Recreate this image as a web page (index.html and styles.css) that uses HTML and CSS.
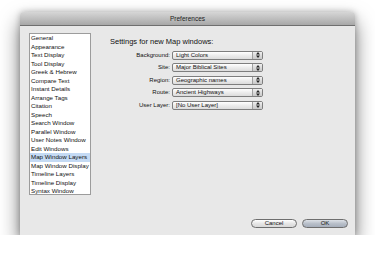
FILE: index.html
```html
<!DOCTYPE html>
<html lang="en">
<head>
    <meta charset="UTF-8">
    <meta name="viewport" content="width=device-width, initial-scale=1.0">
    <title>Preferences</title>
    <link rel="stylesheet" href="styles.css">
</head>
<body>
    <div class="window">
        <div class="titlebar">Preferences</div>
        <div class="content">
            <div class="panes">
                <ul class="pref-list">
                    <li>General</li>
                    <li>Appearance</li>
                    <li>Text Display</li>
                    <li>Tool Display</li>
                    <li>Greek &amp; Hebrew</li>
                    <li>Compare Text</li>
                    <li>Instant Details</li>
                    <li>Arrange Tags</li>
                    <li>Citation</li>
                    <li>Speech</li>
                    <li>Search Window</li>
                    <li>Parallel Window</li>
                    <li>User Notes Window</li>
                    <li>Edit Windows</li>
                    <li class="selected">Map Window Layers</li>
                    <li>Map Window Display</li>
                    <li>Timeline Layers</li>
                    <li>Timeline Display</li>
                    <li>Syntax Window</li>
                </ul>
                <div class="settings">
                    <h2>Settings for new Map windows:</h2>
                    <div class="form">
                        <label>Background:</label>
                        <div class="popup"><span class="value">Light Colors</span><span class="arrows"><svg width="4" height="6" viewBox="0 0 4 6"><path d="M0 2.5L2 0L4 2.5Z M0 3.5L2 6L4 3.5Z" fill="#222"/></svg></span></div>
                        <label>Site:</label>
                        <div class="popup"><span class="value">Major Biblical Sites</span><span class="arrows"><svg width="4" height="6" viewBox="0 0 4 6"><path d="M0 2.5L2 0L4 2.5Z M0 3.5L2 6L4 3.5Z" fill="#222"/></svg></span></div>
                        <label>Region:</label>
                        <div class="popup"><span class="value">Geographic names</span><span class="arrows"><svg width="4" height="6" viewBox="0 0 4 6"><path d="M0 2.5L2 0L4 2.5Z M0 3.5L2 6L4 3.5Z" fill="#222"/></svg></span></div>
                        <label>Route:</label>
                        <div class="popup"><span class="value">Ancient Highways</span><span class="arrows"><svg width="4" height="6" viewBox="0 0 4 6"><path d="M0 2.5L2 0L4 2.5Z M0 3.5L2 6L4 3.5Z" fill="#222"/></svg></span></div>
                        <label>User Layer:</label>
                        <div class="popup"><span class="value">[No User Layer]</span><span class="arrows"><svg width="4" height="6" viewBox="0 0 4 6"><path d="M0 2.5L2 0L4 2.5Z M0 3.5L2 6L4 3.5Z" fill="#222"/></svg></span></div>
                    </div>
                </div>
            </div>
            <div class="buttons">
                <button class="btn">Cancel</button>
                <button class="btn btn-default">OK</button>
            </div>
        </div>
    </div>
</body>
</html>
```

FILE: styles.css
```css
body {
    margin: 0;
    padding: 12px 0 0 20px;
    background-color: #ffffff;
    font-family: "Liberation Sans", Arial, sans-serif;
    color: #111;
}
.window {
    width: 335px;
    height: 223px;
    background-color: #e8e8e8;
    border-radius: 4px 4px 0 0;
    box-shadow: 0 10px 20px rgba(0, 0, 0, 0.55), 0 0 6px rgba(0, 0, 0, 0.25);
    display: flex;
    flex-direction: column;
}
.titlebar {
    height: 14px;
    line-height: 13px;
    box-sizing: border-box;
    font-size: 6.5px;
    text-align: center;
    color: #1e1e1e;
    background: linear-gradient(#d6d6d6, #a8a8a8);
    border-bottom: 1px solid #6f6f6f;
    border-radius: 4px 4px 0 0;
}
.content {
    flex: 1;
    display: flex;
    flex-direction: column;
    padding: 7px 7px 7px 9px;
}
.panes {
    flex: 1;
    display: flex;
}
.pref-list {
    list-style: none;
    margin: 0;
    padding: 0;
    width: 62px;
    height: 162px;
    box-sizing: border-box;
    background-color: #ffffff;
    border: 1px solid #9c9c9c;
    font-size: 6.2px;
}
.pref-list li {
    line-height: 8.5px;
    padding-left: 1px;
    white-space: nowrap;
}
.pref-list li.selected {
    background-color: #c4daf4;
}
.settings {
    margin-left: 19px;
}
.settings h2 {
    margin: 4px 0 3.5px 0;
    font-size: 7.5px;
    line-height: 10px;
    font-weight: normal;
}
.form {
    display: grid;
    grid-template-columns: 60px 91px;
    column-gap: 2px;
    row-gap: 3.5px;
}
.form label {
    text-align: right;
    font-size: 6px;
    line-height: 9px;
}
.popup {
    height: 9px;
    box-sizing: border-box;
    border: 1px solid #7e7e7e;
    border-radius: 2px;
    background: linear-gradient(#ffffff, #ececec 50%, #dcdcdc);
    display: flex;
    font-size: 6px;
    line-height: 7px;
}
.popup .value {
    flex: 1;
    padding-left: 3px;
}
.popup .arrows {
    width: 9px;
    border-left: 1px solid #a0a0a0;
    display: flex;
    align-items: center;
    justify-content: center;
    background: linear-gradient(#eeeeee, #c8c8c8);
}
.buttons {
    display: flex;
    justify-content: flex-end;
    gap: 5px;
}
.btn {
    width: 46px;
    height: 9px;
    padding: 0;
    border: 1px solid #6e6e6e;
    border-radius: 5px;
    font-family: "Liberation Sans", Arial, sans-serif;
    font-size: 6px;
    line-height: 7px;
    color: #111;
    background: linear-gradient(#ffffff, #e6e6e6 50%, #d8d8d8);
}
.btn-default {
    background: linear-gradient(#dde1e7, #b9c0ca 50%, #a6aebb);
}
```
